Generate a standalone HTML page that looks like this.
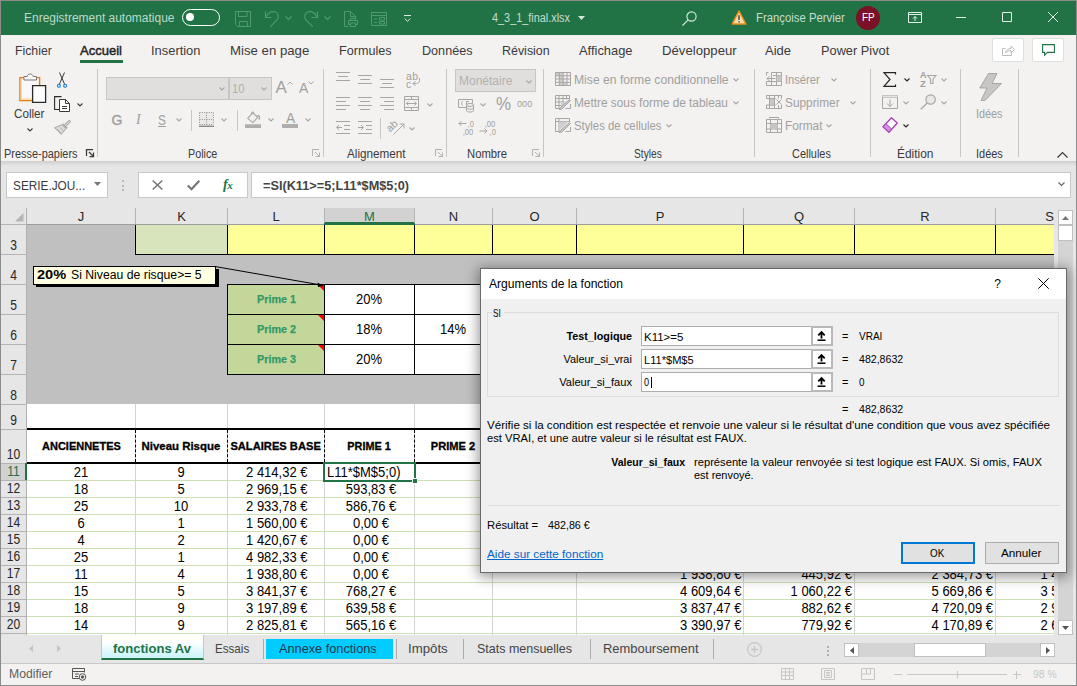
<!DOCTYPE html>
<html lang="fr">
<head>
<meta charset="utf-8">
<title>4_3_1_final.xlsx - Excel</title>
<style>
*{box-sizing:border-box;margin:0;padding:0}
html,body{width:1077px;height:686px;overflow:hidden;background:#e6e6e6}
body{font-family:"Liberation Sans",sans-serif;font-size:12px;color:#262626;position:relative}
.a{position:absolute}
.t{position:absolute;white-space:nowrap;line-height:1}
svg{position:absolute;overflow:visible}
/* window frame */
#frameL{left:0;top:0;width:1px;height:686px;background:#8c8c8c}
#frameT{left:0;top:0;width:1077px;height:1px;background:#8c8c8c}
#frameR{left:1076px;top:0;width:1px;height:686px;background:#8c8c8c}
#frameB{left:0;top:685px;width:1077px;height:1px;background:#8c8c8c}
/* title bar */
#title{left:1px;top:1px;width:1075px;height:34px;background:#217346}
#title .t{color:#fff;font-size:12px}
/* tabs + ribbon */
#tabs{left:1px;top:35px;width:1075px;height:31px;background:#f3f2f1}
#tabs .t{font-size:13px;color:#3b3a39;top:9px}
#ribbon{left:1px;top:66px;width:1075px;height:95px;background:#f3f2f1}
#rshadow{left:1px;top:161px;width:1075px;height:5px;background:linear-gradient(#cfcfcf,#e6e6e6)}
.sep{position:absolute;top:10px;width:1px;height:88px;background:#c8c6c4}
.gl{position:absolute;top:81.700px;font-size:12px;color:#3b3a39;white-space:nowrap;line-height:1}
.dis{color:#a19f9d}
/* formula bar */
#fbar{left:1px;top:166px;width:1075px;height:42px;background:#e6e6e6}
.box{position:absolute;background:#fff;border:1px solid #c8c8c8}
/* grid */
#grid{left:1px;top:208px;width:1053px;height:427px;background:#fff;overflow:hidden}

#grid .ch{position:absolute;top:0;height:16px;background:#e6e6e6;border-left:1px solid #b4b4b4;font-size:13px;color:#262626;text-align:center;line-height:18px}
#grid .rh{position:absolute;left:0;width:26px;background:#e6e6e6;border-top:1px solid #b4b4b4;font-size:13px;color:#262626;text-align:center}
#grid .rh span{position:absolute;left:0;right:1px;bottom:1px;line-height:14px;transform:scale(.93,1.1);transform-origin:50% 85%}
#grid .c{position:absolute;font-size:13px;color:#000;line-height:17px;white-space:nowrap;transform:scaleY(1.07);transform-origin:50% 75%}
#grid .vl{position:absolute;width:1px;background:#d4d4d4}
#grid .hl{position:absolute;height:1px;background:#cfdfb4}
#grid .bk{position:absolute;background:#000}
/* dialog */
#dlg{left:480px;top:268px;width:587px;height:305px;background:#f0f0f0;outline:1px solid #6a6a6a;outline-offset:-1px;box-shadow:0 2px 12px 2px rgba(0,0,0,.4)}
#dlg .t{margin-left:-.7px}
/* bottom */
#sheetbar{left:1px;top:636px;width:1075px;height:27px;background:#e6e6e6}
#status{left:1px;top:664px;width:1075px;height:21px;background:#f3f2f1}
</style>
</head>
<body>
<!-- TITLE BAR -->
<div id="title" class="a">
<span class="t" id="tAuto" style="left:23px;top:11px;color:#bfdaca;transform:scaleX(0.998);transform-origin:0 0">Enregistrement automatique</span>
<div class="a" style="left:181px;top:8px;width:38px;height:17px;border:1.5px solid #fff;border-radius:9px"></div>
<div class="a" style="left:185px;top:12px;width:8px;height:8px;border-radius:4px;background:#fff"></div>
<!-- save -->
<svg style="left:233px;top:9px" width="17" height="17" viewBox="0 0 17 17" fill="none" stroke="#4f9a70" stroke-width="1"><path d="M1.500 1.500h15v15h-13l-2-2z"/><path d="M4.500 1.500v5h8.500v-5M5.500 16.500v-5h8v5"/></svg>
<!-- undo -->
<svg style="left:263px;top:9px" width="16" height="18" viewBox="0 0 16 18" fill="none" stroke="#4f9a70" stroke-width="1.1"><path d="M1.500 1.500v6h6"/><path d="M1.700 7.300C3.500 4 6 1.600 9.300 1.600c3 0 5 2.200 5 5 0 1.600-.7 2.700-1.700 3.700L6.200 16.800"/></svg>
<svg style="left:284px;top:15px" width="7" height="4" viewBox="0 0 7 4" fill="none" stroke="#4f9a70" stroke-width="1.1"><path d="M.5.5l3 3 3-3"/></svg>
<!-- redo -->
<svg style="left:302px;top:9px" width="16" height="18" viewBox="0 0 16 18" fill="none" stroke="#4f9a70" stroke-width="1.1"><path d="M14.500 1.500v6h-6"/><path d="M14.300 7.300C12.500 4 10 1.600 6.700 1.600c-3 0-5 2.200-5 5 0 1.600.7 2.700 1.700 3.700l6.400 6.500"/></svg>
<svg style="left:323px;top:15px" width="7" height="4" viewBox="0 0 7 4" fill="none" stroke="#4f9a70" stroke-width="1.1"><path d="M.5.5l3 3 3-3"/></svg>
<!-- print preview -->
<svg style="left:342px;top:9px" width="16" height="17" viewBox="0 0 16 17" fill="none" stroke="#4f9a70" stroke-width="1"><path d="M5.500 16.500h-4v-15h6l5 5V8"/><path d="M7.500 1.500v5h5"/><path d="M7.500 14.500h-2v-4h9v4h-2"/><path d="M7.500 10.500v-2h5v2M7.500 13h5v3.500h-5z"/></svg>
<!-- form -->
<svg style="left:370px;top:11px" width="17" height="15" viewBox="0 0 17 15" fill="none" stroke="#4f9a70" stroke-width="1"><path d="M.5.500h15v13H.5z"/><path d="M.5 3.500h15"/><path d="M3 7h3M3 10.500h3M8.500 5.500h5v2.500h-5zM8.500 9.500h5v2.500h-5z"/></svg>
<!-- qat customize -->
<svg style="left:403px;top:14px" width="7" height="7" viewBox="0 0 8 8" fill="none" stroke="#e6f0ea" stroke-width="1.100"><path d="M0 .6h8M.8 4l3.200 3.200L7.200 4"/></svg>
<span class="t" id="tFile" style="left:491px;top:11px;color:#c6ddd0;transform:scaleX(0.906);transform-origin:0 0">4_3_1_final.xlsx</span>
<svg style="left:577px;top:15px" width="7" height="4" viewBox="0 0 7 4"><path d="M0 0h7L3.500 4z" fill="#d4e6db"/></svg>
<!-- search -->
<svg style="left:681px;top:10px" width="15" height="15" viewBox="0 0 15 15" fill="none" stroke="#d4e6db" stroke-width="1.200"><circle cx="9.500" cy="5.500" r="4.600"/><path d="M6.200 8.800L.5 14.500"/></svg>
<!-- warning -->
<svg style="left:730px;top:9px" width="16" height="15" viewBox="0 0 16 15"><path d="M8 1.200L14.800 14H1.200z" fill="#fde0ae" stroke="#ee8c1b" stroke-width="1.500" stroke-linejoin="round"/><path d="M8 5.200v4.800M8 11.200v1.400" stroke="#222" stroke-width="1.200"/></svg>
<span class="t" id="tUser" style="left:755px;top:11px;color:#c6ddd0;transform:scaleX(0.944);transform-origin:0 0">Françoise Pervier</span>
<div class="a" style="left:855px;top:5px;width:24px;height:24px;border-radius:12px;background:#7a1126"></div>
<span class="t" style="left:861px;top:12px;color:#fff;font-size:10px">FP</span>
<!-- ribbon display -->
<svg style="left:907px;top:11px" width="14" height="11" viewBox="0 0 14 11" fill="none" stroke="#e6f0ea" stroke-width="1"><path d="M.5.5h13v10H.5z"/><path d="M.5 2.500h13"/><path d="M7 9V4.500M5 6.500l2-2 2 2"/></svg>
<!-- min max close -->
<svg style="left:955px;top:16px" width="10" height="1" viewBox="0 0 10 1"><path d="M0 .5h10" stroke="#e6f0ea" stroke-width="1"/></svg>
<svg style="left:1001px;top:11px" width="10" height="10" viewBox="0 0 10 10" fill="none" stroke="#e6f0ea" stroke-width="1"><path d="M.5.5h9v9h-9z"/></svg>
<svg style="left:1047px;top:11px" width="10" height="10" viewBox="0 0 10 10" fill="none" stroke="#e6f0ea" stroke-width="1"><path d="M0 0l10 10M10 0L0 10"/></svg>
</div>
<!-- TABS -->
<div id="tabs" class="a">
<span class="t" id="tab0" style="left:14.0px;transform:scaleX(0.943);transform-origin:0 0">Fichier</span>
<span class="t" id="tab1" style="left:79.3px;-webkit-text-stroke:0.45px #252423;color:#252423;transform:scaleX(1.002);transform-origin:0 0">Accueil</span>
<span class="t" id="tab2" style="left:150.0px;transform:scaleX(0.992);transform-origin:0 0">Insertion</span>
<span class="t" id="tab3" style="left:229.4px;transform:scaleX(1.016);transform-origin:0 0">Mise en page</span>
<span class="t" id="tab4" style="left:338.0px;transform:scaleX(0.971);transform-origin:0 0">Formules</span>
<span class="t" id="tab5" style="left:421.3px;transform:scaleX(0.970);transform-origin:0 0">Données</span>
<span class="t" id="tab6" style="left:501.3px;transform:scaleX(0.957);transform-origin:0 0">Révision</span>
<span class="t" id="tab7" style="left:578.2px;transform:scaleX(0.991);transform-origin:0 0">Affichage</span>
<span class="t" id="tab8" style="left:660.9px;transform:scaleX(1.013);transform-origin:0 0">Développeur</span>
<span class="t" id="tab9" style="left:763.6px;transform:scaleX(0.999);transform-origin:0 0">Aide</span>
<span class="t" id="tab10" style="left:820.0px;transform:scaleX(0.983);transform-origin:0 0">Power Pivot</span>
<div class="a" style="left:79px;top:25px;width:43px;height:3px;background:#217346"></div>
<div class="a" style="left:991px;top:3px;width:32px;height:24px;background:#fff;border:1px solid #e1dfdd;border-radius:2px"></div>
<div class="a" style="left:1031px;top:3px;width:32px;height:24px;background:#fff;border:1px solid #e1dfdd;border-radius:2px"></div>
<svg style="left:1001px;top:9px" width="13" height="12" viewBox="0 0 13 12" fill="none" stroke="#c0bebc" stroke-width="1"><path d="M3.500 4.500h-3v7h9v-3"/><path d="M3.500 9c.5-3 2.500-4.500 5.500-4.500V2l3.500 3.500L9 9V6.500c-2.500 0-4 .5-5.500 2.500z"/></svg>
<svg style="left:1041px;top:9px" width="13" height="12" viewBox="0 0 13 12" fill="none" stroke="#217346" stroke-width="1.100"><path d="M.6.600h11.800v7.800H5.500L2.600 11.200V8.400h-2z"/></svg>
</div>
<!-- RIBBON -->
<div id="ribbon" class="a">
<svg style="left:17px;top:6px" width="29" height="32" viewBox="0 0 29 32" ><path d="M1.900 5.600h19.700v23H1.900z" fill="#f8f8f8" stroke="#e6810f" stroke-width="1.400"/><path d="M3.300 7v20.200h17" fill="none" stroke="#fbd494" stroke-width="1.300"/><path d="M5.900 8V4.500h3.300c.3-3.300 5.700-3.300 6 0h3.300V8z" fill="#fafafa" stroke="#7a7876" stroke-width="1"/><path d="M14.600 13.700h13v16.700h-13z" fill="#fcfcfc" stroke="#2b2a29" stroke-width="1.300"/></svg>
<span class="t" id="rColler" style="left:13px;top:42px;font-size:12px;color:#3b3a39;transform:scaleX(0.973);transform-origin:0 0">Coller</span>
<svg style="left:25.5px;top:61.5px" width="6" height="4" viewBox="0 0 6 4" ><path d="M.5.500l2.500 2.500L5.500.500" fill="none" stroke="#3b3a39" stroke-width="1.100"/></svg>
<svg style="left:55px;top:6px" width="12" height="16" viewBox="0 0 12 16" ><path d="M3.500 .5l5 11.500M8.500 .5l-5 11.500" stroke="#3b3a39" stroke-width="1" fill="none"/><circle cx="2.900" cy="13.800" r="1.500" fill="none" stroke="#2b88d8" stroke-width="1.200"/><circle cx="9.100" cy="13.800" r="1.500" fill="none" stroke="#2b88d8" stroke-width="1.200"/></svg>
<svg style="left:53px;top:30px" width="17" height="16" viewBox="0 0 17 16" ><path d="M6 13.500H.6V.600H7.500" fill="none" stroke="#2b2a29" stroke-width="1.100"/><path d="M5.500 3.500h6l4 4v8h-10z" fill="#fff" stroke="#3b3a39" stroke-width="1"/><path d="M11.500 3.500v4h4M8 10.500h5M8 12.500h5" fill="none" stroke="#3b3a39" stroke-width="1"/></svg>
<svg style="left:75.5px;top:36.5px" width="6" height="4" viewBox="0 0 6 4" ><path d="M.5.500l2.500 2.500L5.500.500" fill="none" stroke="#3b3a39" stroke-width="1.100"/></svg>
<svg style="left:53px;top:54px" width="17" height="15" viewBox="0 0 17 15" ><path d="M11 4.500l3.700-3.700c.9-.8 2.100.4 1.300 1.300L12.300 5.800" stroke="#a8a6a4" fill="#f3f2f1" stroke-width="1.100"/><path d="M9.300 3.300l4.400 4.400-1.200 1.200-4.400-4.400z" fill="#a8a6a4"/><path d="M8 4.700L.7 7.700l6.500 6.800 4.700-5.900z" fill="#dddbd9" stroke="#a8a6a4" stroke-width="1" stroke-linejoin="round"/><path d="M3.200 9.200l3.800 3.800M5.800 7.300l4 4" stroke="#a8a6a4" stroke-width=".8" fill="none"/></svg>
<span class="gl" id="glPP" style="left:2.500px;transform:scaleX(0.911);transform-origin:0 0">Presse-papiers</span>
<svg style="left:85px;top:83px" width="8" height="8" viewBox="0 0 8 8" ><path d="M.5 7V.500H7M3 3l4.500 4.500M7.500 3.500v4h-4" fill="none" stroke="#3b3a39" stroke-width="1.250"/></svg>
<div class="sep" style="left:96px;top:3px"></div>
<div class="a" style="left:105px;top:11px;width:123px;height:23px;background:#e1dfdd;border:1px solid #c8c6c4"></div>
<svg style="left:218px;top:21px" width="6" height="4" viewBox="0 0 6 4" ><path d="M.5.500l2.500 2.500L5.500.500" fill="none" stroke="#a8a6a4" stroke-width="1.100"/></svg>
<div class="a" style="left:228px;top:11px;width:43px;height:23px;background:#e1dfdd;border:1px solid #c8c6c4"></div>
<span class="t dis" style="left:231px;top:17px;font-size:12px;color:#b3b0ad;transform:scaleX(.93);transform-origin:0 0">10</span>
<svg style="left:260px;top:21px" width="6" height="4" viewBox="0 0 6 4" ><path d="M.5.500l2.500 2.500L5.500.500" fill="none" stroke="#a8a6a4" stroke-width="1.100"/></svg>
<span class="t dis" style="left:274.500px;top:13px;font-size:17px">A</span>
<svg style="left:285.5px;top:15px" width="6" height="4" viewBox="0 0 6 4" ><path d="M.5 3.500l2.500-2.500 2.500 2.500" fill="none" stroke="#a8a6a4" stroke-width="1"/></svg>
<span class="t dis" style="left:298px;top:15px;font-size:14px">A</span>
<svg style="left:307px;top:15px" width="6" height="4" viewBox="0 0 6 4" ><path d="M.5.500l2.500 2.500L5.500.500" fill="none" stroke="#a8a6a4" stroke-width="1"/></svg>
<span class="t dis" style="left:110.500px;top:47px;font-size:14px;-webkit-text-stroke:0.400px #a19f9d">G</span>
<span class="t dis" style="left:135px;top:47px;font-size:14px;font-style:italic;font-family:'Liberation Serif',serif">I</span>
<span class="t dis" style="left:156.500px;top:47px;font-size:14px;text-decoration:underline;transform:scaleX(.85);transform-origin:0 0">S</span>
<svg style="left:174.5px;top:52px" width="6" height="4" viewBox="0 0 6 4" ><path d="M.5.500l2.500 2.500L5.500.500" fill="none" stroke="#a8a6a4" stroke-width="1.100"/></svg>
<div class="a" style="left:190px;top:44px;width:1px;height:21px;background:#c8c6c4"></div>
<svg style="left:198px;top:46px" width="15" height="15" viewBox="0 0 15 15" ><path d="M1 1h13v11.500H1z" fill="#eceae8"/><path d="M.5.500h14M.5 12.500h14M.5.500v12M14.500.500v12M7.500.500v12M.5 7.500h14" fill="none" stroke="#8f8d8b" stroke-width="1" stroke-dasharray="1 1.330"/><path d="M0 14.300h15" stroke="#8a8886" stroke-width="1.400"/></svg>
<svg style="left:220px;top:52px" width="6" height="4" viewBox="0 0 6 4" ><path d="M.5.500l2.500 2.500L5.500.500" fill="none" stroke="#a8a6a4" stroke-width="1.100"/></svg>
<div class="a" style="left:236px;top:44px;width:1px;height:21px;background:#c8c6c4"></div>
<svg style="left:244px;top:45px" width="17" height="17" viewBox="0 0 17 17" ><path d="M7.800 1.900L2.700 7.300l5.100 4.400 4.800-5.300z" fill="#f3f2f1" stroke="#a8a6a4" stroke-width="1.100" stroke-linejoin="round"/><path d="M6.400 3.900V2.200c0-1.700 2.600-1.700 2.600 0v1" fill="none" stroke="#a8a6a4" stroke-width="1"/><path d="M11.800 4.900c1.500-.6 2.800.2 2.700 1.500l-.3 2.200" fill="none" stroke="#a8a6a4" stroke-width="1.400"/><path d="M0 13.300h16v3.700H0z" fill="#b0aeac"/></svg>
<svg style="left:266.5px;top:52px" width="6" height="4" viewBox="0 0 6 4" ><path d="M.5.500l2.500 2.500L5.500.500" fill="none" stroke="#a8a6a4" stroke-width="1.100"/></svg>
<span class="t dis" style="left:284.500px;top:43.500px;font-size:15px;transform:scaleX(.92);transform-origin:0 0">A</span>
<div class="a" style="left:281px;top:58px;width:16px;height:4px;background:#b0aeac"></div>
<svg style="left:303.5px;top:52px" width="6" height="4" viewBox="0 0 6 4" ><path d="M.5.500l2.500 2.500L5.500.500" fill="none" stroke="#a8a6a4" stroke-width="1.100"/></svg>
<span class="gl" id="glPol" style="left:186.500px;transform:scaleX(0.896);transform-origin:0 0">Police</span>
<svg style="left:311px;top:83px" width="8" height="8" viewBox="0 0 8 8" ><path d="M.5 7V.500H7M3 3l4.500 4.500M7.500 3.500v4h-4" fill="none" stroke="#b3b0ad" stroke-width="1"/></svg>
<div class="sep" style="left:322px;top:3px"></div>
<svg style="left:335px;top:6px" width="14" height="16" viewBox="0 0 14 16" ><path d="M0 0.5h14M2.3 4.5h9.7M0 8.5h14" stroke="#a8a6a4" stroke-width="1.100" fill="none"/></svg>
<svg style="left:357px;top:9px" width="14" height="16" viewBox="0 0 14 16" ><path d="M0 0.5h14M2.3 4.5h9.7M0 8.5h14" stroke="#a8a6a4" stroke-width="1.100" fill="none"/></svg>
<svg style="left:379px;top:13px" width="14" height="16" viewBox="0 0 14 16" ><path d="M0 0.5h14M2.3 4.5h9.7M0 8.5h14" stroke="#a8a6a4" stroke-width="1.100" fill="none"/></svg>
<span class="t dis" style="left:405px;top:5px;font-size:10.500px;letter-spacing:.3px">ab</span>
<span class="t dis" style="left:405px;top:13px;font-size:10.500px">c</span>
<svg style="left:411px;top:12px" width="9" height="10" viewBox="0 0 9 10" ><path d="M7.500 0v2.500c0 2-1.500 3-3 3H1M3.500 3L1 5.500 3.500 8" fill="none" stroke="#a8a6a4" stroke-width="1"/></svg>
<svg style="left:335px;top:31px" width="14" height="16" viewBox="0 0 14 16" ><path d="M0 0.5h14M0 4.5h10M0 8.5h14M0 12.5h10" stroke="#a8a6a4" stroke-width="1.100" fill="none"/></svg>
<svg style="left:357px;top:31px" width="14" height="16" viewBox="0 0 14 16" ><path d="M0 0.5h14M2.2 4.5h9.8M0 8.5h14M2.2 12.5h9.8" stroke="#a8a6a4" stroke-width="1.100" fill="none"/></svg>
<svg style="left:379px;top:31px" width="14" height="16" viewBox="0 0 14 16" ><path d="M0 0.5h14M4.2 4.5h9.8M0 8.5h14M4.2 12.5h9.8" stroke="#a8a6a4" stroke-width="1.100" fill="none"/></svg>
<svg style="left:403px;top:30px" width="15" height="15" viewBox="0 0 15 15" ><path d="M.5.500h14v14H.5zM.5 3.500h14M.5 11.500h14M7.500.500v3M7.500 11.500v3" fill="none" stroke="#a8a6a4" stroke-width="1"/><path d="M2.500 7.500h10M4.500 5.500l-2 2 2 2M10.500 5.500l2 2-2 2" fill="none" stroke="#a8a6a4" stroke-width="1"/></svg>
<svg style="left:425.5px;top:36.5px" width="6" height="4" viewBox="0 0 6 4" ><path d="M.5.500l2.500 2.500L5.500.500" fill="none" stroke="#a8a6a4" stroke-width="1.100"/></svg>
<svg style="left:335px;top:55px" width="14" height="13" viewBox="0 0 14 13" ><path d="M0 .5h14M0 12.500h14M8 4.500h6M8 8.500h6" stroke="#a8a6a4" stroke-width="1.100" fill="none"/><path d="M6 6.500H.8M3 4L.6 6.500 3 9" stroke="#a8a6a4" stroke-width="1" fill="none"/></svg>
<svg style="left:357px;top:55px" width="14" height="13" viewBox="0 0 14 13" ><path d="M0 .5h14M0 12.500h14M8 4.500h6M8 8.500h6" stroke="#a8a6a4" stroke-width="1.100" fill="none"/><path d="M0 6.500h5.200M3 4l2.400 2.500L3 9" stroke="#a8a6a4" stroke-width="1" fill="none"/></svg>
<div class="a" style="left:379px;top:52px;width:1px;height:21px;background:#c8c6c4"></div>
<span class="t dis" style="left:390px;top:57px;font-size:10.500px;transform:rotate(-42deg);transform-origin:0 100%">ab</span>
<svg style="left:392px;top:57px" width="12" height="12" viewBox="0 0 12 12" ><path d="M.5 11.500l10.500-10.500M6.500 1h4.500v4.500" fill="none" stroke="#a8a6a4" stroke-width="1"/></svg>
<svg style="left:407.5px;top:60.5px" width="6" height="4" viewBox="0 0 6 4" ><path d="M.5.500l2.500 2.500L5.500.500" fill="none" stroke="#a8a6a4" stroke-width="1.100"/></svg>
<span class="gl" id="glAli" style="left:346px;transform:scaleX(0.976);transform-origin:0 0">Alignement</span>
<svg style="left:434px;top:83px" width="8" height="8" viewBox="0 0 8 8" ><path d="M.5 7V.500H7M3 3l4.500 4.500M7.500 3.500v4h-4" fill="none" stroke="#b3b0ad" stroke-width="1"/></svg>
<div class="sep" style="left:445px;top:3px"></div>
<div class="a" style="left:454px;top:3px;width:81px;height:23px;background:#e1dfdd;border:1px solid #c8c6c4"></div>
<span class="t" id="rMon" style="left:457.500px;top:9px;font-size:12px;color:#b3b0ad;transform:scaleX(0.999);transform-origin:0 0">Monétaire</span>
<svg style="left:525.3px;top:14px" width="6" height="4" viewBox="0 0 6 4" ><path d="M.5.500l2.500 2.500L5.500.500" fill="none" stroke="#a8a6a4" stroke-width="1.100"/></svg>
<svg style="left:457px;top:33px" width="16" height="13" viewBox="0 0 16 13" ><path d="M8 8.500H.5v-8h14v4" fill="none" stroke="#a8a6a4" stroke-width="1"/><path d="M5 2.500c-2 0-2 4 0 4M8.500 6.500v-4h2.500" fill="none" stroke="#a8a6a4" stroke-width="1"/><ellipse cx="12" cy="6" rx="3.500" ry="1.500" fill="#f3f2f1" stroke="#a8a6a4" stroke-width="1"/><path d="M8.500 6v5.500c0 2 7 2 7 0V6M8.500 8.700c0 2 7 2 7 0" fill="none" stroke="#a8a6a4" stroke-width="1"/></svg>
<svg style="left:479.3px;top:36.5px" width="6" height="4" viewBox="0 0 6 4" ><path d="M.5.500l2.500 2.500L5.500.500" fill="none" stroke="#a8a6a4" stroke-width="1.100"/></svg>
<span class="t dis" style="left:494.500px;top:29px;font-size:18px;transform:scaleX(.94);transform-origin:0 0">%</span>
<span class="t dis" id="r000" style="left:516px;top:33px;font-size:9.500px;transform:scaleX(0.965);transform-origin:0 0">000</span>
<svg style="left:457px;top:54px" width="16" height="16" viewBox="0 0 16 16" ><path d="M8.500 3.500H.8M3.500 1L1 3.500 3.500 6" fill="none" stroke="#a8a6a4" stroke-width="1"/></svg>
<span class="t dis" style="top:53px;font-size:9.500px;transform:scaleX(.8);transform-origin:100% 0;right:602.500px">,0</span>
<span class="t dis" style="top:60.500px;font-size:9.500px;transform:scaleX(.8);transform-origin:100% 0;right:602.500px">,00</span>
<span class="t dis" style="top:53px;font-size:9.500px;transform:scaleX(.8);transform-origin:100% 0;right:580.500px">,00</span>
<svg style="left:478px;top:62px" width="10" height="6" viewBox="0 0 10 6" ><path d="M.5 3h7.500M5.500.500L8 3 5.500 5.500" fill="none" stroke="#a8a6a4" stroke-width="1"/></svg>
<span class="t dis" style="top:60.500px;font-size:9.500px;transform:scaleX(.8);transform-origin:100% 0;right:580.500px">,0</span>
<span class="gl" id="glNom" style="left:465.500px;transform:scaleX(0.939);transform-origin:0 0">Nombre</span>
<svg style="left:531px;top:83px" width="8" height="8" viewBox="0 0 8 8" ><path d="M.5 7V.500H7M3 3l4.500 4.500M7.500 3.500v4h-4" fill="none" stroke="#b3b0ad" stroke-width="1"/></svg>
<div class="sep" style="left:542px;top:3px"></div>
<svg style="left:554px;top:6px" width="16" height="14" viewBox="0 0 16 14" ><path d="M.5.500h7.700v3.300H.5zM4.300 3.800h3.900v6.500H4.300zM4.300 10.300H12v3.200H4.300z" fill="#cfcdcb"/><path d="M.5.500h15v13H.5zM.5 3.800h15M.5 7h15M.5 10.300h15M4.300 .500v13M8.200 .500v13M12 .500v13" fill="none" stroke="#a8a6a4" stroke-width="1"/></svg>
<span class="t dis" id="rS1" style="left:572.500px;top:8px;font-size:12px;transform:scaleX(1.012);transform-origin:0 0">Mise en forme conditionnelle</span>
<svg style="left:732px;top:11.5px" width="6" height="4" viewBox="0 0 6 4" ><path d="M.5.500l2.500 2.500L5.500.500" fill="none" stroke="#a8a6a4" stroke-width="1.100"/></svg>
<svg style="left:554px;top:29px" width="16" height="15" viewBox="0 0 16 15" ><path d="M14.500 4V.500H.5v13h5M.5 3.500h14M.5 7h9M.5 10.500h6M4 .500v13M8 .500v7M11.500 .500v4" fill="none" stroke="#a8a6a4" stroke-width="1"/><path d="M5.500 7h6l-5 5.500z" fill="#d0cecc"/><path d="M14.500 4.500l1 1-8 8c-1 1-2.500 1.200-3.500 1 1-.5 1.500-1.500 2-2.500z" fill="#c8c6c4" stroke="#a8a6a4" stroke-width="1"/><path d="M15.500 9v4.500h-5" fill="none" stroke="#a8a6a4" stroke-width="1"/></svg>
<span class="t dis" id="rS2" style="left:572.500px;top:31px;font-size:12px;transform:scaleX(0.986);transform-origin:0 0">Mettre sous forme de tableau</span>
<svg style="left:732px;top:34.5px" width="6" height="4" viewBox="0 0 6 4" ><path d="M.5.500l2.500 2.500L5.500.500" fill="none" stroke="#a8a6a4" stroke-width="1.100"/></svg>
<svg style="left:554px;top:52px" width="16" height="15" viewBox="0 0 16 15" ><path d="M14.500 4V.500H.5v13h5M.5 3.500h14M4 .500v13" fill="none" stroke="#a8a6a4" stroke-width="1"/><path d="M4 3.500h9.500L4 12.500z" fill="#d0cecc"/><path d="M14.500 4.500l1 1-8 8c-1 1-2.500 1.200-3.500 1 1-.5 1.500-1.500 2-2.500z" fill="#c8c6c4" stroke="#a8a6a4" stroke-width="1"/><path d="M15.500 9v4.500h-5" fill="none" stroke="#a8a6a4" stroke-width="1"/></svg>
<span class="t dis" id="rS3" style="left:572.500px;top:54px;font-size:12px;transform:scaleX(0.943);transform-origin:0 0">Styles de cellules</span>
<svg style="left:664.5px;top:57.5px" width="6" height="4" viewBox="0 0 6 4" ><path d="M.5.500l2.500 2.500L5.500.500" fill="none" stroke="#a8a6a4" stroke-width="1.100"/></svg>
<span class="gl" id="glSty" style="left:632.500px;transform:scaleX(0.850);transform-origin:0 0">Styles</span>
<div class="sep" style="left:753px;top:3px"></div>
<svg style="left:765px;top:6px" width="16" height="14" viewBox="0 0 16 14" ><path d="M5.500.500h10v13H.5v-4M.5 3.500v-3h2M5.500 9.500h10M5.500 .500v13M10.500 .500v13M.5 9.500h5M7 3.500h8.500" fill="none" stroke="#a8a6a4" stroke-width="1"/><path d="M10.500 3.500h5v6h-5z" fill="#c8c6c4"/><path d="M9.500 6.500H1M3.500 4L1 6.500 3.500 9" fill="none" stroke="#a8a6a4" stroke-width="1"/></svg>
<span class="t dis" id="rC1" style="left:783.500px;top:8px;font-size:12px;transform:scaleX(0.926);transform-origin:0 0">Insérer</span>
<svg style="left:829.6px;top:11.5px" width="6" height="4" viewBox="0 0 6 4" ><path d="M.5.500l2.500 2.500L5.500.500" fill="none" stroke="#a8a6a4" stroke-width="1.100"/></svg>
<svg style="left:765px;top:29px" width="16" height="14" viewBox="0 0 16 14" ><path d="M.5 3.500v-3h15v3M.5 10v3.500h15V10M.5 3.500h9M.5 10h9M3.500 .500v13M8.500 .500v3M8.500 10v3.500M12.500 .500v3M12.500 10v3.500M3.500 3.500h5v6.500h-5z" fill="none" stroke="#a8a6a4" stroke-width="1"/><path d="M4 4h4v5.500H4z" fill="#c8c6c4"/><path d="M10.500 4.500l5 5M15.500 4.500l-5 5" fill="none" stroke="#a8a6a4" stroke-width="1"/></svg>
<span class="t dis" id="rC2" style="left:783.500px;top:31px;font-size:12px;transform:scaleX(0.986);transform-origin:0 0">Supprimer</span>
<svg style="left:849.4px;top:34.5px" width="6" height="4" viewBox="0 0 6 4" ><path d="M.5.500l2.500 2.500L5.500.500" fill="none" stroke="#a8a6a4" stroke-width="1.100"/></svg>
<svg style="left:765px;top:51px" width="16" height="16" viewBox="0 0 16 16" ><path d="M.5 2.500h15v13H.5zM.5 6.500h15M.5 12h15M4.500 2.500v13M11.500 2.500v13" fill="none" stroke="#a8a6a4" stroke-width="1"/><path d="M4.500 6.500h7v5.500h-7z" fill="#c8c6c4"/><path d="M3.500 .500h9M3.500 0v1.500M12.500 0v1.500" fill="none" stroke="#a8a6a4" stroke-width="1"/></svg>
<span class="t dis" id="rC3" style="left:783.500px;top:54px;font-size:12px;transform:scaleX(0.986);transform-origin:0 0">Format</span>
<svg style="left:825.3px;top:57.5px" width="6" height="4" viewBox="0 0 6 4" ><path d="M.5.500l2.500 2.500L5.500.500" fill="none" stroke="#a8a6a4" stroke-width="1.100"/></svg>
<span class="gl" id="glCel" style="left:790.500px;transform:scaleX(0.911);transform-origin:0 0">Cellules</span>
<div class="sep" style="left:869px;top:3px"></div>
<svg style="left:882px;top:5.5px" width="14" height="15" viewBox="0 0 14 15" ><path d="M12.500 2.500V.700H1l6 6.800-6 6.800h11.500V12.500" fill="none" stroke="#252423" stroke-width="1.200"/></svg>
<svg style="left:903.3px;top:11.5px" width="6" height="4" viewBox="0 0 6 4" ><path d="M.5.500l2.500 2.500L5.500.500" fill="none" stroke="#252423" stroke-width="1.100"/></svg>
<span class="t dis" style="left:919px;top:4.500px;font-size:9px;font-weight:bold">A</span>
<span class="t dis" style="left:919px;top:13px;font-size:9.500px;font-weight:bold">Z</span>
<svg style="left:926px;top:9px" width="10" height="9" viewBox="0 0 10 9" ><path d="M.5.500h8.500L6 4v4.500H3.500V4z" fill="none" stroke="#a8a6a4" stroke-width="1.100"/></svg>
<svg style="left:939.5px;top:11.5px" width="6" height="4" viewBox="0 0 6 4" ><path d="M.5.500l2.500 2.500L5.500.500" fill="none" stroke="#a8a6a4" stroke-width="1.100"/></svg>
<svg style="left:881px;top:29px" width="16" height="14" viewBox="0 0 16 14" ><path d="M.5.500h15v13H.5zM.5 2.500h15" fill="none" stroke="#a8a6a4" stroke-width="1"/><path d="M.5.500h15v2H.5z" fill="#e8e6e4"/><path d="M8 4.500v7M5 8.500l3 3 3-3" fill="none" stroke="#a8a6a4" stroke-width="1"/></svg>
<svg style="left:901.5px;top:34.5px" width="6" height="4" viewBox="0 0 6 4" ><path d="M.5.500l2.500 2.500L5.500.500" fill="none" stroke="#a8a6a4" stroke-width="1.100"/></svg>
<svg style="left:919px;top:28px" width="17" height="16" viewBox="0 0 17 16" ><circle cx="10.600" cy="5.500" r="4.700" fill="#eae8e6" stroke="#a8a6a4" stroke-width="1.200"/><path d="M7.200 9L.8 15.300" stroke="#a8a6a4" stroke-width="1.300"/></svg>
<svg style="left:939.5px;top:34.5px" width="6" height="4" viewBox="0 0 6 4" ><path d="M.5.500l2.500 2.500L5.500.500" fill="none" stroke="#a8a6a4" stroke-width="1.100"/></svg>
<svg style="left:881px;top:51px" width="16" height="16" viewBox="0 0 16 16" ><path d="M9.500.800l5.700 5.200-8.200 9.200-6-5.500z" fill="#fff" stroke="#a33fb1" stroke-width="1.300" stroke-linejoin="round"/><path d="M1 9.700l2.800-3.200 5.800 5.500-2.600 3.200z" fill="#d68fe0" stroke="#a33fb1" stroke-width="1"/></svg>
<svg style="left:901.5px;top:57.5px" width="6" height="4" viewBox="0 0 6 4" ><path d="M.5.500l2.500 2.500L5.500.500" fill="none" stroke="#252423" stroke-width="1.100"/></svg>
<span class="gl" id="glEdi" style="left:896px;transform:scaleX(0.992);transform-origin:0 0">Édition</span>
<div class="sep" style="left:958.500px;top:3px"></div>
<svg style="left:978px;top:7px" width="23" height="29" viewBox="0 0 23 29" ><path d="M9.500.500h8.500l-5 10h9.500L6 27.500H2l6-12.500H.8z" fill="#c8c6c4" stroke="#a8a6a4" stroke-width="1" stroke-linejoin="round"/></svg>
<span class="t dis" id="rIdees" style="left:974.500px;top:42px;font-size:12px;transform:scaleX(0.903);transform-origin:0 0">Idées</span>
<span class="gl" id="glIde" style="left:974.500px;transform:scaleX(0.913);transform-origin:0 0">Idées</span>
<div class="sep" style="left:1017px;top:3px"></div>
<svg style="left:1056px;top:86px" width="11" height="6" viewBox="0 0 11 6" ><path d="M.5 5.500l5-5 5 5" fill="none" stroke="#3b3a39" stroke-width="1.200"/></svg>
</div>
<div id="rshadow" class="a"></div>
<!-- FORMULA BAR -->
<div id="fbar" class="a">
<div class="box" style="left:5px;top:6px;width:102px;height:26px"></div>
<span class="t" id="fName" style="left:12px;top:14px;font-size:12px;color:#3b3a39;transform:scaleX(0.984);transform-origin:0 0">SERIE.JOU...</span>
<svg style="left:93px;top:16px" width="7" height="4" viewBox="0 0 7 4"><path d="M0 0h7L3.500 4z" fill="#777"/></svg>
<div class="a" style="left:121px;top:14px;width:2px;height:2px;background:#b8b8b8"></div>
<div class="a" style="left:121px;top:18.500px;width:2px;height:2px;background:#b8b8b8"></div>
<div class="a" style="left:121px;top:23px;width:2px;height:2px;background:#b8b8b8"></div>
<div class="box" style="left:137px;top:6px;width:110px;height:26px"></div>
<svg style="left:150.500px;top:14px" width="11" height="10" viewBox="0 0 11 10"><path d="M.7.500l9.600 9M10.300.500L.7 9.500" stroke="#777" stroke-width="1.600" fill="none"/></svg>
<svg style="left:185.500px;top:14px" width="13" height="10" viewBox="0 0 13 10"><path d="M.8 5.500l3.700 3.700L12.300.700" stroke="#777" stroke-width="2.200" fill="none"/></svg>
<span class="t" style="left:222px;top:12px;font-size:14px;color:#217346;font-family:'Liberation Serif',serif;font-style:italic;font-weight:bold">f<span style="font-size:11px;margin-left:-.5px">x</span></span>
<div class="box" style="left:250px;top:6px;width:820px;height:26px"></div>
<span class="t" id="fFormula" style="left:262px;top:13px;font-size:13px;font-weight:bold;color:#444;transform:scaleX(0.978);transform-origin:0 0">=SI(K11&gt;=5;L11*$M$5;0)</span>
<svg style="left:1057px;top:16px" width="7" height="4" viewBox="0 0 7 4"><path d="M.5.500l3 3 3-3" fill="none" stroke="#666" stroke-width="1.200"/></svg>
</div>
<!-- GRID -->
<div id="grid" class="a">
<div class="a" style="left:0;top:0;width:1054px;height:16px;background:#e6e6e6"></div>
<svg style="left:13.500px;top:4.500px" width="8.500" height="8.500" viewBox="0 0 10 10"><path d="M10 0v10H0z" fill="#b4b4b4"/></svg>
<div class="ch" style="left:25px;width:109px">J</div>
<div class="ch" style="left:134px;width:92px">K</div>
<div class="ch" style="left:226px;width:97px">L</div>
<div class="ch" style="left:323px;width:90px;background:#d2d2d2;color:#217346;border-bottom:2px solid #217346">M</div>
<div class="ch" style="left:413px;width:78px">N</div>
<div class="ch" style="left:491px;width:84px">O</div>
<div class="ch" style="left:575px;width:167px">P</div>
<div class="ch" style="left:742px;width:111px">Q</div>
<div class="ch" style="left:853px;width:141px">R</div>
<div class="ch" style="left:994px;width:60px;text-align:right;padding-right:1px">S</div>
<div class="a" style="left:0;top:16px;width:1054px;height:1px;background:#9e9e9e"></div>
<div class="a" style="left:323px;top:15px;width:91px;height:2px;background:#217346"></div>
<div class="a" style="left:26px;top:17px;width:1028px;height:179px;background:#c0c0c0"></div>
<div class="a" style="left:134px;top:17px;width:93px;height:30px;background:#d8e4bc;border-left:1px solid #000;border-bottom:1px solid #000"></div>
<div class="a" style="left:226px;top:17px;width:828px;height:30px;background:#ffff99;border-bottom:1px solid #000"></div>
<div class="bk" style="left:226px;top:17px;width:1px;height:30px"></div>
<div class="bk" style="left:323px;top:17px;width:1px;height:30px"></div>
<div class="bk" style="left:413px;top:17px;width:1px;height:30px"></div>
<div class="bk" style="left:491px;top:17px;width:1px;height:30px"></div>
<div class="bk" style="left:575px;top:17px;width:1px;height:30px"></div>
<div class="bk" style="left:742px;top:17px;width:1px;height:30px"></div>
<div class="bk" style="left:853px;top:17px;width:1px;height:30px"></div>
<div class="bk" style="left:994px;top:17px;width:1px;height:30px"></div>
<div class="a" style="left:226px;top:76px;width:266px;height:91px;background:#fff;border:1px solid #000"></div>
<div class="a" style="left:227px;top:77px;width:96px;height:89px;background:#c4d79b"></div>
<div class="bk" style="left:226px;top:106px;width:266px;height:1px"></div>
<div class="bk" style="left:226px;top:136px;width:266px;height:1px"></div>
<div class="bk" style="left:323px;top:76px;width:1px;height:91px"></div>
<div class="bk" style="left:413px;top:76px;width:1px;height:91px"></div>
<span class="c" id="pr0" style="left:255.800px;top:86px;font-size:11px;font-weight:bold;color:#339966;-webkit-text-stroke:.25px #339966;line-height:1;transform:scaleX(0.981);transform-origin:0 0">Prime 1</span>
<svg style="left:317px;top:77px" width="6" height="6" viewBox="0 0 6 6"><path d="M0 0h6v6z" fill="#f00"/></svg>
<span class="c" id="pr1" style="left:255.800px;top:116px;font-size:11px;font-weight:bold;color:#339966;-webkit-text-stroke:.25px #339966;line-height:1;transform:scaleX(0.981);transform-origin:0 0">Prime 2</span>
<svg style="left:317px;top:107px" width="6" height="6" viewBox="0 0 6 6"><path d="M0 0h6v6z" fill="#f00"/></svg>
<span class="c" id="pr2" style="left:255.800px;top:146px;font-size:11px;font-weight:bold;color:#339966;-webkit-text-stroke:.25px #339966;line-height:1;transform:scaleX(0.981);transform-origin:0 0">Prime 3</span>
<svg style="left:317px;top:137px" width="6" height="6" viewBox="0 0 6 6"><path d="M0 0h6v6z" fill="#f00"/></svg>
<div class="c" style="left:323px;width:90px;top:85px;text-align:center;line-height:1">20%</div>
<div class="c" style="left:323px;width:90px;top:115px;text-align:center;line-height:1">18%</div>
<div class="c" style="left:323px;width:90px;top:145px;text-align:center;line-height:1">20%</div>
<div class="c" style="left:413px;width:78px;top:115px;text-align:center;line-height:1">14%</div>
<div class="a" style="left:35px;top:61px;width:183px;height:18px;background:#000"></div>
<div class="a" style="left:32px;top:58px;width:183px;height:19px;background:#ffffe1;border:1px solid #000"></div>
<span class="c" id="cmtB" style="left:35.500px;top:59.500px;font-size:13px;font-weight:bold;line-height:1;transform:scaleX(1.122);transform-origin:0 0">20%</span>
<span class="c" id="cmtR" style="left:69.500px;top:61px;font-size:12px;line-height:1;transform:scaleX(1.020);transform-origin:0 0">Si Niveau de risque&gt;= 5</span>
<svg style="left:214px;top:58px" width="112" height="24" viewBox="0 0 112 24"><path d="M0 .500L106 19" stroke="#000" stroke-width="1" fill="none"/><path d="M108.500 20l-6-3.500 .5 4.500z" fill="#000"/></svg>
<div class="a" style="left:26px;top:196px;width:1028px;height:231px;background:#fff"></div>
<div class="vl" style="left:134px;top:196px;height:231px"></div>
<div class="vl" style="left:226px;top:196px;height:231px"></div>
<div class="vl" style="left:323px;top:196px;height:231px"></div>
<div class="vl" style="left:413px;top:196px;height:231px"></div>
<div class="vl" style="left:491px;top:196px;height:231px"></div>
<div class="vl" style="left:575px;top:196px;height:231px"></div>
<div class="vl" style="left:742px;top:196px;height:231px"></div>
<div class="vl" style="left:853px;top:196px;height:231px"></div>
<div class="vl" style="left:994px;top:196px;height:231px"></div>
<div class="hl" style="left:26px;top:272px;width:1028px"></div>
<div class="hl" style="left:26px;top:289px;width:1028px"></div>
<div class="hl" style="left:26px;top:306px;width:1028px"></div>
<div class="hl" style="left:26px;top:323px;width:1028px"></div>
<div class="hl" style="left:26px;top:340px;width:1028px"></div>
<div class="hl" style="left:26px;top:357px;width:1028px"></div>
<div class="hl" style="left:26px;top:374px;width:1028px"></div>
<div class="hl" style="left:26px;top:391px;width:1028px"></div>
<div class="hl" style="left:26px;top:408px;width:1028px"></div>
<div class="hl" style="left:26px;top:425px;width:1028px"></div>
<div class="bk" style="left:26px;top:220px;width:1028px;height:2px"></div>
<div class="bk" style="left:26px;top:253.500px;width:1028px;height:2px"></div>
<div class="a" style="left:134px;top:222px;width:0;height:32px;border-left:1px dashed #000"></div>
<div class="a" style="left:226px;top:222px;width:0;height:32px;border-left:1px dashed #000"></div>
<div class="a" style="left:323px;top:222px;width:0;height:32px;border-left:1px dashed #000"></div>
<div class="a" style="left:413px;top:222px;width:0;height:32px;border-left:1px dashed #000"></div>
<div class="c" style="left:26px;width:108px;top:233px;text-align:center;line-height:1;font-size:11px;font-weight:bold;-webkit-text-stroke:.3px #000"><span id="hd0" style="display:inline-block;text-align:center;transform:scaleX(0.999);transform-origin:center top">ANCIENNETES</span></div>
<div class="c" style="left:134px;width:92px;top:233px;text-align:center;line-height:1;font-size:11px;font-weight:bold;-webkit-text-stroke:.3px #000"><span id="hd1" style="display:inline-block;text-align:center;transform:scaleX(1.039);transform-origin:center top">Niveau Risque</span></div>
<div class="c" style="left:226px;width:97px;top:233px;text-align:center;line-height:1;font-size:11px;font-weight:bold;-webkit-text-stroke:.3px #000"><span id="hd2" style="display:inline-block;text-align:center;transform:scaleX(1.014);transform-origin:center top">SALAIRES BASE</span></div>
<div class="c" style="left:323px;width:90px;top:233px;text-align:center;line-height:1;font-size:11px;font-weight:bold;-webkit-text-stroke:.3px #000"><span id="hd3" style="display:inline-block;text-align:center;transform:scaleX(0.984);transform-origin:center top">PRIME 1</span></div>
<div class="c" style="left:413px;width:78px;top:233px;text-align:center;line-height:1;font-size:11px;font-weight:bold;-webkit-text-stroke:.3px #000"><span id="hd4" style="display:inline-block;text-align:center;transform:scaleX(1.006);transform-origin:center top">PRIME 2</span></div>
<div class="c" style="left:26px;width:108px;top:256px;text-align:center">21</div>
<div class="c" style="left:134px;width:92px;top:256px;text-align:center">9</div>
<div class="c" style="left:226px;width:80.500px;top:256px;text-align:right">2 414,32 €</div>
<div class="c" style="left:26px;width:108px;top:273px;text-align:center">18</div>
<div class="c" style="left:134px;width:92px;top:273px;text-align:center">5</div>
<div class="c" style="left:226px;width:80.500px;top:273px;text-align:right">2 969,15 €</div>
<div class="c" style="left:324px;width:92px;top:273px;text-align:center">593,83 €</div>
<div class="c" style="left:26px;width:108px;top:290px;text-align:center">25</div>
<div class="c" style="left:134px;width:92px;top:290px;text-align:center">10</div>
<div class="c" style="left:226px;width:80.500px;top:290px;text-align:right">2 933,78 €</div>
<div class="c" style="left:324px;width:92px;top:290px;text-align:center">586,76 €</div>
<div class="c" style="left:26px;width:108px;top:307px;text-align:center">6</div>
<div class="c" style="left:134px;width:92px;top:307px;text-align:center">1</div>
<div class="c" style="left:226px;width:80.500px;top:307px;text-align:right">1 560,00 €</div>
<div class="c" style="left:324px;width:92px;top:307px;text-align:center">0,00 €</div>
<div class="c" style="left:26px;width:108px;top:324px;text-align:center">4</div>
<div class="c" style="left:134px;width:92px;top:324px;text-align:center">2</div>
<div class="c" style="left:226px;width:80.500px;top:324px;text-align:right">1 420,67 €</div>
<div class="c" style="left:324px;width:92px;top:324px;text-align:center">0,00 €</div>
<div class="c" style="left:26px;width:108px;top:341px;text-align:center">25</div>
<div class="c" style="left:134px;width:92px;top:341px;text-align:center">1</div>
<div class="c" style="left:226px;width:80.500px;top:341px;text-align:right">4 982,33 €</div>
<div class="c" style="left:324px;width:92px;top:341px;text-align:center">0,00 €</div>
<div class="c" style="left:26px;width:108px;top:358px;text-align:center">11</div>
<div class="c" style="left:134px;width:92px;top:358px;text-align:center">4</div>
<div class="c" style="left:226px;width:80.500px;top:358px;text-align:right">1 938,80 €</div>
<div class="c" style="left:324px;width:92px;top:358px;text-align:center">0,00 €</div>
<div class="c" style="left:575px;width:165.500px;top:358px;text-align:right">1 938,80 €</div>
<div class="c" style="left:742px;width:109px;top:358px;text-align:right">445,92 €</div>
<div class="c" style="left:853px;width:139px;top:358px;text-align:right">2 384,73 €</div>
<div class="c" style="left:1039.500px;top:358px">1 4</div>
<div class="c" style="left:26px;width:108px;top:375px;text-align:center">15</div>
<div class="c" style="left:134px;width:92px;top:375px;text-align:center">5</div>
<div class="c" style="left:226px;width:80.500px;top:375px;text-align:right">3 841,37 €</div>
<div class="c" style="left:324px;width:92px;top:375px;text-align:center">768,27 €</div>
<div class="c" style="left:575px;width:165.500px;top:375px;text-align:right">4 609,64 €</div>
<div class="c" style="left:742px;width:109px;top:375px;text-align:right">1 060,22 €</div>
<div class="c" style="left:853px;width:139px;top:375px;text-align:right">5 669,86 €</div>
<div class="c" style="left:1039.500px;top:375px">3 5</div>
<div class="c" style="left:26px;width:108px;top:392px;text-align:center">18</div>
<div class="c" style="left:134px;width:92px;top:392px;text-align:center">9</div>
<div class="c" style="left:226px;width:80.500px;top:392px;text-align:right">3 197,89 €</div>
<div class="c" style="left:324px;width:92px;top:392px;text-align:center">639,58 €</div>
<div class="c" style="left:575px;width:165.500px;top:392px;text-align:right">3 837,47 €</div>
<div class="c" style="left:742px;width:109px;top:392px;text-align:right">882,62 €</div>
<div class="c" style="left:853px;width:139px;top:392px;text-align:right">4 720,09 €</div>
<div class="c" style="left:1039.500px;top:392px">2 9</div>
<div class="c" style="left:26px;width:108px;top:409px;text-align:center">14</div>
<div class="c" style="left:134px;width:92px;top:409px;text-align:center">9</div>
<div class="c" style="left:226px;width:80.500px;top:409px;text-align:right">2 825,81 €</div>
<div class="c" style="left:324px;width:92px;top:409px;text-align:center">565,16 €</div>
<div class="c" style="left:575px;width:165.500px;top:409px;text-align:right">3 390,97 €</div>
<div class="c" style="left:742px;width:109px;top:409px;text-align:right">779,92 €</div>
<div class="c" style="left:853px;width:139px;top:409px;text-align:right">4 170,89 €</div>
<div class="c" style="left:1039.500px;top:409px">2 6</div>
<div class="a" style="left:322px;top:254px;width:93px;height:20px;border:2px solid #217346;background:#fff"></div>
<div class="c" id="selTxt" style="left:326px;top:256px">L11*$M$5;0)</div>
<div class="a" style="left:411px;top:270px;width:6px;height:6px;background:#217346;border:1px solid #fff"></div>
<div class="a" style="left:0;top:17px;width:26px;height:410px;background:#e6e6e6"></div>
<div class="rh" style="top:16px;height:30px"><span>3</span></div>
<div class="rh" style="top:46px;height:30px"><span>4</span></div>
<div class="rh" style="top:76px;height:30px"><span>5</span></div>
<div class="rh" style="top:106px;height:30px"><span>6</span></div>
<div class="rh" style="top:136px;height:30px"><span>7</span></div>
<div class="rh" style="top:166px;height:30px"><span>8</span></div>
<div class="rh" style="top:196px;height:25px"><span>9</span></div>
<div class="rh" style="top:221px;height:34px"><span>10</span></div>
<div class="rh" style="top:255px;height:17px;background:#d2d2d2;color:#217346"><span>11</span></div>
<div class="rh" style="top:272px;height:17px"><span>12</span></div>
<div class="rh" style="top:289px;height:17px"><span>13</span></div>
<div class="rh" style="top:306px;height:17px"><span>14</span></div>
<div class="rh" style="top:323px;height:17px"><span>15</span></div>
<div class="rh" style="top:340px;height:17px"><span>16</span></div>
<div class="rh" style="top:357px;height:17px"><span>17</span></div>
<div class="rh" style="top:374px;height:17px"><span>18</span></div>
<div class="rh" style="top:391px;height:17px"><span>19</span></div>
<div class="rh" style="top:408px;height:17px"><span>20</span></div>
<div class="a" style="left:0;top:425px;width:26px;height:1px;background:#b4b4b4"></div>
<div class="a" style="left:25px;top:17px;width:1px;height:410px;background:#b0b0b0"></div>
<div class="a" style="left:24px;top:255px;width:2px;height:17px;background:#217346"></div>
</div>
<!-- VERTICAL SCROLLBAR -->
<div id="vscroll" class="a" style="left:1055px;top:208px;width:21px;height:427px;background:#e6e6e6">
<div class="a" style="left:3px;top:17px;width:15px;height:397px;background:#d4d4d4"></div>
<div class="a" style="left:3px;top:2px;width:15px;height:15px;background:#fff;border:1px solid #c0c0c0"></div>
<svg style="left:7px;top:7.500px" width="7" height="4" viewBox="0 0 7 4"><path d="M0 4h7L3.500 0z" fill="#777"/></svg>
<div class="a" style="left:3px;top:17px;width:15px;height:16px;background:#fff;border:1px solid #c0c0c0"></div>
<div class="a" style="left:3px;top:412px;width:15px;height:15px;background:#fff;border:1px solid #c0c0c0"></div>
<svg style="left:7px;top:418px" width="7" height="4" viewBox="0 0 7 4"><path d="M0 0h7L3.500 4z" fill="#555"/></svg>
</div>
<!-- DIALOG -->
<div id="dlg" class="a">
<div class="a" style="left:1px;top:0;width:586px;height:305px">
<div class="a" style="left:0;top:1px;width:585px;height:30px;background:#fff"></div>
<span class="t" id="dTitle" style="left:8.3px;top:10.2px;font-size:12px;color:#000;transform:scaleX(1.009);transform-origin:0 0">Arguments de la fonction</span>
<span class="t" id="dQ" style="left:514.0px;top:10.0px;font-size:12px;color:#000">?</span>
<svg style="left:557px;top:9.7px" width="11" height="11" viewBox="0 0 11 11"><path d="M.3.300l10.400 10.400M10.700.300L.3 10.700" stroke="#000" stroke-width="1" fill="none"/></svg>
<div class="a" style="left:6px;top:44px;width:572px;height:85px;border:1px solid #dcdcdc"></div>
<div class="a" style="left:10.5px;top:43px;width:12px;height:4px;background:#f0f0f0"></div>
<span class="t" id="dSI" style="left:12.8px;top:40.4px;font-size:11px;color:#000;transform:scaleX(0.74);transform-origin:0 0">SI</span>
<span class="t" id="dL0" style="right:435.0px;top:63.1px;font-size:11px;color:#000;font-weight:bold;transform:scaleX(0.979);transform-origin:right top">Test_logique</span>
<div class="a" style="left:160px;top:58px;width:192px;height:20px;background:#fff;border:1px solid #adadad"></div>
<div class="a" style="left:330px;top:58px;width:22px;height:20px;background:#fff;border:2px solid #b9b9b9"></div>
<svg style="left:335.5px;top:63px" width="9" height="10" viewBox="0 0 9 10"><path d="M4.500 7.500V1.500M1.300 4.300l3.200-3.200 3.200 3.200" stroke="#000" stroke-width="1.800" fill="none"/><path d="M.5 9.200h8" stroke="#000" stroke-width="1.500"/></svg>
<span class="t" id="dV0" style="left:164.0px;top:64.1px;font-size:11px;color:#000;transform:scaleX(1.044);transform-origin:0 0">K11&gt;=5</span>
<span class="t" id="dE0" style="left:361.7px;top:63.1px;font-size:11px;color:#000">=</span>
<span class="t" id="dR0" style="left:378.2px;top:63.1px;font-size:11px;color:#000;transform:scaleX(0.911);transform-origin:0 0">VRAI</span>
<span class="t" id="dL1" style="right:435.0px;top:85.9px;font-size:11px;color:#000;transform:scaleX(0.994);transform-origin:right top">Valeur_si_vrai</span>
<div class="a" style="left:160px;top:81px;width:192px;height:20px;background:#fff;border:1px solid #adadad"></div>
<div class="a" style="left:330px;top:81px;width:22px;height:20px;background:#fff;border:2px solid #b9b9b9"></div>
<svg style="left:335.5px;top:86px" width="9" height="10" viewBox="0 0 9 10"><path d="M4.500 7.500V1.500M1.300 4.300l3.200-3.200 3.200 3.200" stroke="#000" stroke-width="1.800" fill="none"/><path d="M.5 9.200h8" stroke="#000" stroke-width="1.500"/></svg>
<span class="t" id="dV1" style="left:164.0px;top:86.9px;font-size:11px;color:#000;transform:scaleX(1.007);transform-origin:0 0">L11*$M$5</span>
<span class="t" id="dE1" style="left:361.7px;top:85.9px;font-size:11px;color:#000">=</span>
<span class="t" id="dR1" style="left:378.2px;top:85.9px;font-size:11px;color:#000;transform:scaleX(0.963);transform-origin:0 0">482,8632</span>
<span class="t" id="dL2" style="right:435.0px;top:108.9px;font-size:11px;color:#000;transform:scaleX(1.012);transform-origin:right top">Valeur_si_faux</span>
<div class="a" style="left:160px;top:104px;width:192px;height:20px;background:#fff;border:1px solid #adadad"></div>
<div class="a" style="left:330px;top:104px;width:22px;height:20px;background:#fff;border:2px solid #b9b9b9"></div>
<svg style="left:335.5px;top:109px" width="9" height="10" viewBox="0 0 9 10"><path d="M4.500 7.500V1.500M1.300 4.300l3.200-3.200 3.200 3.200" stroke="#000" stroke-width="1.800" fill="none"/><path d="M.5 9.200h8" stroke="#000" stroke-width="1.500"/></svg>
<span class="t" id="dV2" style="left:164.0px;top:109.4px;font-size:11px;color:#000;transform:scaleX(0.833);transform-origin:0 0">0</span>
<span class="t" id="dE2" style="left:361.7px;top:108.9px;font-size:11px;color:#000">=</span>
<span class="t" id="dR2" style="left:378.2px;top:108.9px;font-size:11px;color:#000;transform:scaleX(0.898);transform-origin:0 0">0</span>
<div class="a" style="left:170px;top:109px;width:1px;height:11px;background:#000"></div>
<span class="t" id="dE3" style="left:361.7px;top:136.1px;font-size:11px;color:#000">=</span>
<span class="t" id="dR3" style="left:378.2px;top:136.1px;font-size:11px;color:#000;transform:scaleX(0.963);transform-origin:0 0">482,8632</span>
<span class="t" id="dD1" style="left:6.5px;top:151.6px;font-size:11px;color:#000;transform:scaleX(1.053);transform-origin:0 0">Vérifie si la condition est respectée et renvoie une valeur si le résultat d'une condition que vous avez spécifiée</span>
<span class="t" id="dD2" style="left:6.5px;top:164.7px;font-size:11px;color:#000;transform:scaleX(1.017);transform-origin:0 0">est VRAI, et une autre valeur si le résultat est FAUX.</span>
<span class="t" id="dA0" style="right:381.7px;top:188.9px;font-size:11px;color:#000;font-weight:bold;transform:scaleX(0.958);transform-origin:right top">Valeur_si_faux</span>
<span class="t" id="dA1" style="left:214.0px;top:188.9px;font-size:11px;color:#000;transform:scaleX(1.016);transform-origin:0 0">représente la valeur renvoyée si test logique est FAUX. Si omis, FAUX</span>
<span class="t" id="dA2" style="left:214.0px;top:201.7px;font-size:11px;color:#000;transform:scaleX(0.995);transform-origin:0 0">est renvoyé.</span>
<div class="a" style="left:6.5px;top:237px;width:572px;height:1px;background:#dcdcdc"></div>
<span class="t" id="dRes" style="left:6.5px;top:251.9px;font-size:11px;color:#000;transform:scaleX(1.023);transform-origin:0 0">Résultat =</span>
<span class="t" id="dResV" style="left:67.8px;top:251.9px;font-size:11px;color:#000;transform:scaleX(0.976);transform-origin:0 0">482,86 €</span>
<span class="t" id="dLink" style="left:6.5px;top:281px;font-size:11px;color:#0066cc;text-decoration:underline;transform:scaleX(1.068);transform-origin:0 0">Aide sur cette fonction</span>
<div class="a" style="left:420px;top:274px;width:74px;height:22px;background:#e1e1e1;border:2px solid #0078d7"></div>
<span class="t" id="dOK" style="left:450.0px;top:279.7px;font-size:11px;color:#000;transform:scaleX(0.893);transform-origin:0 0">OK</span>
<div class="a" style="left:504px;top:274px;width:74px;height:22px;background:#e1e1e1;border:1px solid #adadad"></div>
<span class="t" id="dAnn" style="left:520.2px;top:279.7px;font-size:11px;color:#000;transform:scaleX(1.065);transform-origin:0 0">Annuler</span>
</div>
</div>
<!-- SHEET TABS -->
<div id="sheetbar" class="a">
<svg style="left:28px;top:9px" width="4" height="7" viewBox="0 0 4 7"><path d="M4 0v7L0 3.500z" fill="#c4c4c4"/></svg>
<svg style="left:56px;top:9px" width="4" height="7" viewBox="0 0 4 7"><path d="M0 0v7l4-3.500z" fill="#c4c4c4"/></svg>
<div class="a" style="left:100px;top:-1px;width:103px;height:25px;background:linear-gradient(#fff 30%,#c9f3fb);border-bottom:2px solid #217346;border-left:1px solid #c6c6c6;border-right:1px solid #c6c6c6"></div>
<span class="t" id="st0" style="left:112.300px;top:6px;font-size:13px;font-weight:bold;color:#217346;transform:scaleX(1.003);transform-origin:0 0">fonctions Av</span>
<span class="t" id="st1" style="left:214.400px;top:6px;font-size:13px;color:#444;transform:scaleX(0.893);transform-origin:0 0">Essais</span>
<div class="a" style="left:262px;top:3px;width:1px;height:20px;background:#ababab"></div>
<div class="a" style="left:265px;top:3px;width:127px;height:20px;background:#00ccff"></div>
<span class="t" id="st2" style="left:278.300px;top:6px;font-size:13px;color:#1f3a4d;transform:scaleX(0.980);transform-origin:0 0">Annexe fonctions</span>
<div class="a" style="left:394.500px;top:3px;width:1px;height:20px;background:#ababab"></div>
<span class="t" id="st3" style="left:406.900px;top:6px;font-size:13px;color:#444;transform:scaleX(1.018);transform-origin:0 0">Impôts</span>
<div class="a" style="left:461.500px;top:3px;width:1px;height:20px;background:#ababab"></div>
<span class="t" id="st4" style="left:476.300px;top:6px;font-size:13px;color:#444;transform:scaleX(0.960);transform-origin:0 0">Stats mensuelles</span>
<div class="a" style="left:588.500px;top:3px;width:1px;height:20px;background:#ababab"></div>
<span class="t" id="st5" style="left:602.200px;top:6px;font-size:13px;color:#444;transform:scaleX(0.994);transform-origin:0 0">Remboursement</span>
<div class="a" style="left:712px;top:3px;width:1px;height:20px;background:#ababab"></div>
<svg style="left:746px;top:6px" width="15" height="15" viewBox="0 0 15 15"><circle cx="7.500" cy="7.500" r="6.800" fill="none" stroke="#c6c6c6" stroke-width="1.200"/><path d="M4 7.500h7M7.500 4v7" stroke="#c6c6c6" stroke-width="1.300"/></svg>
<div class="a" style="left:826px;top:10px;width:2px;height:2px;background:#b0b0b0"></div>
<div class="a" style="left:826px;top:14px;width:2px;height:2px;background:#b0b0b0"></div>
<div class="a" style="left:826px;top:18px;width:2px;height:2px;background:#b0b0b0"></div>
<div class="a" style="left:843.500px;top:7px;width:210px;height:14px;background:#d4d4d4"></div>
<div class="a" style="left:843px;top:7px;width:15px;height:14px;background:#fff;border:1px solid #c0c0c0"></div>
<svg style="left:848.500px;top:10.500px" width="4" height="7" viewBox="0 0 4 7"><path d="M4 0v7L0 3.500z" fill="#555"/></svg>
<div class="a" style="left:1039px;top:7px;width:15px;height:14px;background:#fff;border:1px solid #c0c0c0"></div>
<svg style="left:1045px;top:10.500px" width="4" height="7" viewBox="0 0 4 7"><path d="M0 0v7l4-3.500z" fill="#555"/></svg>
<div class="a" style="left:913px;top:7px;width:72px;height:14px;background:#fff;border:1px solid #c0c0c0"></div>
</div>
<!-- STATUS BAR -->
<div id="status" class="a">
<div class="a" style="left:0;top:-1px;width:1075px;height:1px;background:#c8c8c8"></div>
<span class="t" id="stMod" style="left:8.300px;top:4px;font-size:12px;color:#605e5c;transform:scaleX(1.017);transform-origin:0 0">Modifier</span>
<svg style="left:71px;top:4px" width="15" height="13" viewBox="0 0 15 13" fill="none" stroke="#555" stroke-width="1"><path d="M7 10.500H.5v-10h12v4"/><path d="M.5 3.500h12M3 6h4M3 8.500h3"/><circle cx="10.500" cy="9" r="3.300" fill="#f3f2f1"/><circle cx="10.500" cy="9" r="1.200" fill="#555"/></svg>
<svg style="left:780px;top:4px" width="13" height="12" viewBox="0 0 13 12" fill="none" stroke="#c6c6c6" stroke-width="1"><path d="M.5.500h12v11H.5zM.5 4h12M.5 7.500h12M4.500.500v11M8.500.500v11"/></svg>
<svg style="left:820px;top:4px" width="14" height="12" viewBox="0 0 14 12" fill="none" stroke="#c6c6c6" stroke-width="1"><path d="M.5.500h13v11H.5z"/><path d="M3.500 2.500h7v7h-7zM5 4.500h4M5 6h4M5 7.500h4"/></svg>
<svg style="left:860px;top:4px" width="14" height="12" viewBox="0 0 14 12" fill="none" stroke="#c6c6c6" stroke-width="1"><path d="M.5.500h13v11H.5z"/><path d="M5.500.500v5.500h-5M9.500.500v5.500h-4"/></svg>
<div class="a" style="left:893px;top:10px;width:8px;height:1px;background:#c6c6c6"></div>
<div class="a" style="left:906px;top:10px;width:100px;height:1px;background:#c6c6c6"></div>
<div class="a" style="left:956px;top:7px;width:1px;height:7px;background:#c6c6c6"></div>
<div class="a" style="left:1011.500px;top:10px;width:8px;height:1px;background:#c6c6c6"></div>
<div class="a" style="left:1015px;top:6.500px;width:1px;height:8px;background:#c6c6c6"></div>
<span class="t" id="stZoom" style="left:1032px;top:5px;font-size:11px;color:#c6c6c6;transform:scaleX(0.941);transform-origin:0 0">98 %</span>
</div>
<div id="frameL" class="a"></div><div id="frameT" class="a"></div><div id="frameR" class="a"></div><div id="frameB" class="a"></div>
</body>
</html>
